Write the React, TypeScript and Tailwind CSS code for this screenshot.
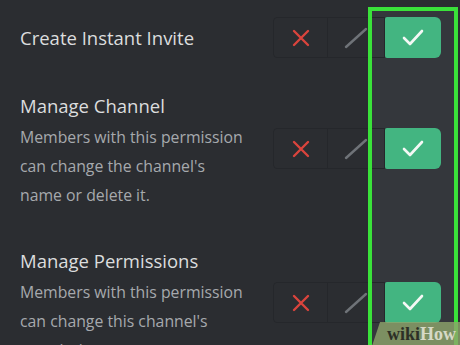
import React from "react";

function XIcon() {
  return (
    <svg width="18" height="18" viewBox="0 0 18 18">
      <path d="M2 2 L16 16 M16 2 L2 16" stroke="#d9443d" strokeWidth="2.4" strokeLinecap="round" />
    </svg>
  );
}

function SlashIcon() {
  return (
    <svg width="24" height="22" viewBox="0 0 24 22">
      <path d="M2 20 L22 2" stroke="#6f7378" strokeWidth="2.4" strokeLinecap="round" />
    </svg>
  );
}

function CheckIcon() {
  return (
    <svg width="22" height="18" viewBox="0 0 22 18">
      <path d="M2 9 L8 15 L20 2" stroke="#f4f8f5" strokeWidth="2.6" fill="none" strokeLinecap="round" strokeLinejoin="round" />
    </svg>
  );
}

function Control() {
  return (
    <div className="flex h-[41px] shrink-0">
      <div className="w-[55px] h-full flex items-center justify-center border border-[#25272b] rounded-l-[4px]">
        <XIcon />
      </div>
      <div className="w-[57px] h-full flex items-center justify-center border-y border-r border-[#25272b]">
        <SlashIcon />
      </div>
      <div className="w-[56px] h-full flex items-center justify-center bg-[#43b581] rounded-r-[6px] rounded-l-[2px]">
        <CheckIcon />
      </div>
    </div>
  );
}

export default function App() {
  return (
    <div
      className="relative w-[460px] h-[345px] overflow-hidden bg-[#2b2d31]"
      style={{ fontFamily: '"Open Sans", "Noto Sans", sans-serif' }}
    >
      {/* highlight column background */}
      <div className="absolute left-[368px] top-[7px] w-[90px] h-[360px] bg-[#34373c]" />

      <div className="relative pl-[20px] pr-[19px]">
        {/* Row 1 */}
        <div className="flex items-center justify-between pt-[17px]">
          <div className="text-[18.5px] leading-[24px] text-[#dcddde]">Create Instant Invite</div>
          <Control />
        </div>

        {/* Row 2 */}
        <div className="flex items-start justify-between mt-[36px]">
          <div>
            <div className="text-[18.5px] leading-[24px] text-[#dcddde]">Manage Channel</div>
            <div className="mt-[5px] text-[15.8px] leading-[29px] text-[#a6a9ad] whitespace-nowrap">
              <div>Members with this permission</div>
              <div>can change the channel's</div>
              <div>name or delete it.</div>
            </div>
          </div>
          <div className="mt-[34px]">
            <Control />
          </div>
        </div>

        {/* Row 3 */}
        <div className="flex items-start justify-between mt-[39px]">
          <div>
            <div className="text-[18.5px] leading-[24px] text-[#dcddde]">Manage Permissions</div>
            <div className="mt-[5px] text-[15.8px] leading-[29px] text-[#a6a9ad] whitespace-nowrap">
              <div>Members with this permission</div>
              <div>can change this channel's</div>
              <div>permissions.</div>
            </div>
          </div>
          <div className="mt-[33px]">
            <Control />
          </div>
        </div>
      </div>

      {/* green highlight border */}
      <div className="absolute left-[368px] top-[7px] w-[90px] h-[360px] border-[4px] border-[#3ae23a]" />

      {/* watermark */}
      <div
        className="absolute right-0 top-[322px] w-[88px] h-[24px] bg-[#8fa56c]/80 flex items-center justify-end pr-[4px]"
        style={{ fontFamily: '"Liberation Serif", serif', clipPath: "polygon(8px 0, 100% 0, 100% 100%, 0 100%)" }}
      >
        <span className="text-[18px] font-bold text-[#2c2f26] leading-none">wiki</span>
        <span className="text-[18px] font-bold text-[#d6d9c6] leading-none">How</span>
      </div>
    </div>
  );
}
